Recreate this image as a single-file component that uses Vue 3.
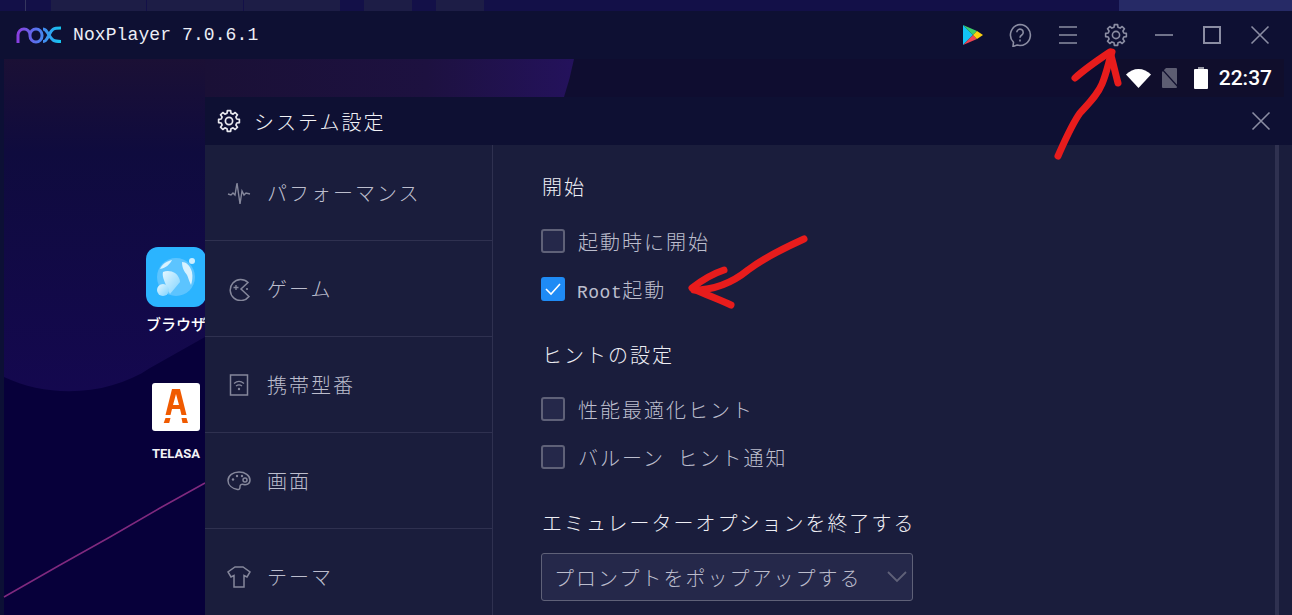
<script setup>
const topTabs = [
  { id: 1, cls: 'tab-a' },
  { id: 2, cls: 'tab-b' },
  { id: 3, cls: 'tab-b' },
  { id: 4, cls: 'tab-c' },
  { id: 5, cls: 'tab-c' }
]

const navItems = [
  { id: 'perf', label: 'パフォーマンス' },
  { id: 'game', label: 'ゲーム' },
  { id: 'phone', label: '携帯型番' },
  { id: 'screen', label: '画面' },
  { id: 'theme', label: 'テーマ' }
]

const startOptions = [
  { latin: '', label: '起動時に開始', checked: false },
  { latin: 'Root', label: '起動', checked: true }
]

const hintOptions = [
  { label: '性能最適化ヒント', checked: false },
  { label: 'バルーン ヒント通知', checked: false }
]

// outline of a cog, used by the toolbar and the dialog header
function gearPath(cx, cy, outer, inner, teeth) {
  const pts = []
  const step = (Math.PI * 2) / teeth
  for (let i = 0; i < teeth; i++) {
    const a = i * step - Math.PI / 2
    const list = [
      [a - step * 0.2, outer],
      [a + step * 0.2, outer],
      [a + step * 0.32, inner],
      [a + step * 0.68, inner]
    ]
    for (const [ang, r] of list) {
      pts.push((cx + Math.cos(ang) * r).toFixed(2) + ' ' + (cy + Math.sin(ang) * r).toFixed(2))
    }
  }
  return 'M' + pts.join('L') + 'Z'
}

const gear = gearPath(12, 12, 10.5, 8, 8)
</script>

<template>
  <div class="screen">
    <div class="top-strip">
      <span class="strip-line"></span>
      <span v-for="t in topTabs" :key="t.id" class="strip-tab" :class="t.cls"></span>
      <span class="strip-right"></span>
    </div>

    <header class="titlebar">
      <svg class="logo" width="46" height="18" viewBox="0 0 46 18" fill="none">
        <defs>
          <linearGradient id="noxGrad" x1="0" y1="0" x2="1" y2="0">
            <stop offset="0" stop-color="#8a3fe0" />
            <stop offset="0.5" stop-color="#4f7cf0" />
            <stop offset="1" stop-color="#12c8f0" />
          </linearGradient>
        </defs>
        <path d="M2 17V9a6 6 0 0 1 12 0v1a6 6 0 0 0 12 0V9a6 6 0 0 0-12 0v1a6 6 0 0 0 12 0M27 3c2 0 3 1 6 6s4 6.500 12 6.500M45 2c-8 0-9 1-12 7s-4 6.500-6 6.500" stroke="url(#noxGrad)" stroke-width="3" />
      </svg>
      <span class="app-name">NoxPlayer 7.0.6.1</span>
      <div class="tools">
        <svg class="tool" width="24" height="24" viewBox="0 0 24 24">
          <path d="M3 2v20l10-10z" fill="#12c3f5" />
          <path d="M3 2l10 10 4-4z" fill="#3ccf6b" />
          <path d="M3 22l10-10 4 4z" fill="#ee4453" />
          <path d="M17 8l6 4-6 4-4-4z" fill="#fdd10f" />
        </svg>
        <svg class="tool" width="24" height="24" viewBox="0 0 24 24" fill="none" stroke="#8b8da3" stroke-width="1.600">
          <path d="M12 1.500a10.500 10.500 0 1 1-3 20.600L5 23.500l.5-4.200A10.500 10.500 0 0 1 12 1.500z" />
          <path d="M8.800 9.300a3.200 3.200 0 1 1 5 2.700c-1.200.8-1.800 1.300-1.800 2.800" />
          <path d="M12 16.500v2" />
        </svg>
        <svg class="tool" width="24" height="24" viewBox="0 0 24 24" fill="none" stroke="#8b8da3" stroke-width="1.600">
          <path d="M3 4h18M3 12h18M3 20h18" />
        </svg>
        <svg class="tool" width="24" height="24" viewBox="0 0 24 24" fill="none" stroke="#8b8da3" stroke-width="1.600">
          <path :d="gear" stroke-linejoin="round" />
          <circle cx="12" cy="12" r="3.600" />
        </svg>
        <svg class="tool" width="24" height="24" viewBox="0 0 24 24" fill="none" stroke="#8b8da3" stroke-width="1.600">
          <path d="M3 12h18" />
        </svg>
        <svg class="tool" width="24" height="24" viewBox="0 0 24 24" fill="none" stroke="#8b8da3" stroke-width="2">
          <path d="M4 4h16v16H4z" />
        </svg>
        <svg class="tool" width="24" height="24" viewBox="0 0 24 24" fill="none" stroke="#8b8da3" stroke-width="1.600">
          <path d="M3.500 3.500l17 17M20.500 3.500l-17 17" />
        </svg>
      </div>
    </header>

    <main class="android">
      <svg class="wallpaper" width="1292" height="556" viewBox="0 0 1292 556">
        <defs>
          <linearGradient id="wallDown" x1="0" y1="0" x2="0" y2="1">
            <stop offset="0" stop-color="#1b1035" />
            <stop offset="0.28" stop-color="#0f0b3e" />
            <stop offset="1" stop-color="#14084f" />
          </linearGradient>
          <linearGradient id="wallAcross" x1="0" y1="0" x2="1" y2="0">
            <stop offset="0" stop-color="#1a1036" />
            <stop offset="0.6" stop-color="#1d1140" />
            <stop offset="1" stop-color="#24125c" />
          </linearGradient>
        </defs>
        <path d="M4 250H205V556H4z" fill="#07003a" />
        <path d="M4 0H205V278L150 309C110 336 50 340 4 318z" fill="url(#wallDown)" />
        <path d="M205 0H574Q570 20 564 38H205z" fill="url(#wallAcross)" />
        <path d="M4 538L60 506 110 478 160 449 205 424" fill="none" stroke="#80297f" stroke-width="1.500" />
      </svg>

      <div class="status">
        <svg width="25" height="20" viewBox="0 0 25 20"><path d="M0 6.500C7-1 18-1 25 6.500L12.500 20z" fill="#fff" /></svg>
        <svg class="sim" width="18" height="20" viewBox="0 0 18 20">
          <path d="M5 0h10a1 1 0 0 1 1 1v18a1 1 0 0 1-1 1H2a1 1 0 0 1-1-1V4z" fill="#5d5d72" />
          <path d="M0 0l18 20" stroke="#100f2e" stroke-width="1.300" />
        </svg>
        <svg class="batt" width="14" height="22" viewBox="0 0 14 22">
          <path d="M4 0h6v2H4z" fill="#9a9aa6" />
          <path d="M1 2h12a1 1 0 0 1 1 1v18a1 1 0 0 1-1 1H1a1 1 0 0 1-1-1V3a1 1 0 0 1 1-1z" fill="#fff" />
        </svg>
        <span class="clock">22:37</span>
      </div>

      <div class="app-icon browser">
        <svg width="60" height="60" viewBox="0 0 60 60">
          <defs>
            <linearGradient id="ballGrad" x1="0" y1="0" x2="1" y2="1">
              <stop offset="0" stop-color="#e6f7ff" />
              <stop offset="1" stop-color="#7fd3ff" />
            </linearGradient>
          </defs>
          <rect width="60" height="60" rx="12" fill="#2bb4ff" />
          <circle cx="30" cy="30" r="19" fill="#5cc4ff" />
          <path d="M17 25c4-2 9-1 12 1 3 2 5 6 5 9l-10 12c-2-3-3-6-4-9-2-5-4-9-3-13z" fill="url(#ballGrad)" />
          <path d="M36 15c4 0 8 3 10 10 1 5 0 10-1 13-2-4-3-8-4-10-2-3-5-6-5-13z" fill="#d8f2ff" />
          <path d="M14 22c2-5 7-8 12-9-2 4-6 8-12 9z" fill="#d8f2ff" />
          <circle cx="46" cy="14" r="3" fill="#cdeeff" />
          <circle cx="17" cy="43" r="6" fill="url(#ballGrad)" />
        </svg>
        <span class="browser-name">ブラウザ</span>
      </div>

      <div class="app-icon telasa">
        <svg width="48" height="48" viewBox="0 0 48 48">
          <rect width="48" height="48" rx="3" fill="#fff" />
          <path d="M20 6h8l6.500 26h-5l-1.500-6h-8l-1.500 6h-5zM24 11l-3 11h6z" fill="#f05a00" fill-rule="evenodd" />
          <path d="M13.500 35h5l-1.300 5h-5.500zM29.500 35h5l1.500 5h-5.500z" fill="#f05a00" />
        </svg>
        <span class="telasa-name">TELASA</span>
      </div>
    </main>

    <section class="dialog">
      <div class="dialog-head">
        <svg width="24" height="24" viewBox="0 0 24 24" fill="none" stroke="#e8e8ee" stroke-width="1.700">
          <path :d="gear" stroke-linejoin="round" />
          <circle cx="12" cy="12" r="3.600" />
        </svg>
        <span class="dialog-title">システム設定</span>
        <svg class="dialog-close" width="24" height="24" viewBox="0 0 24 24" fill="none" stroke="#8b8da3" stroke-width="1.600">
          <path d="M3.500 3.500l17 17M20.500 3.500l-17 17" />
        </svg>
      </div>

      <div class="dialog-body">
        <nav class="side">
          <div v-for="item in navItems" :key="item.id" class="side-item">
            <svg class="side-icon" width="24" height="24" viewBox="0 0 24 24" fill="none" stroke="#85879b" stroke-width="1.500">
              <path v-if="item.id === 'perf'" d="M1 13l3 1 2-2 2 2 2-12 3 21 2-13 2 4 2-2 4 1" stroke-width="1.400" />
              <g v-else-if="item.id === 'game'">
                <path d="M22 19.500A10.500 10.500 0 1 1 21 5.500L14 12z" />
                <path d="M9 8v5M6.500 10.500h5" stroke-width="1.300" />
                <circle cx="20" cy="12" r="1.100" fill="#85879b" stroke="none" />
              </g>
              <g v-else-if="item.id === 'phone'">
                <path d="M3.500 2h17v20h-17z" />
                <path d="M7 10.500c3-2.600 7-2.600 10 0M9 13c2-1.500 4-1.500 6 0" stroke-width="1.300" />
                <circle cx="12" cy="16" r="1.200" fill="#85879b" stroke="none" />
              </g>
              <g v-else-if="item.id === 'screen'">
                <path d="M12 3c6 0 11 3.500 11 8s-4 5-6.500 4.500c-2-.4-3.500 0-3.500 2 0 2-.5 3.500-2.500 3C5 19.500 1 16 1 11.500 1 6.500 6 3 12 3z" />
                <circle cx="6" cy="10.500" r="1.200" fill="#85879b" stroke="none" />
                <circle cx="10" cy="7" r="1.200" fill="#85879b" stroke="none" />
                <circle cx="15" cy="7" r="1.200" fill="#85879b" stroke="none" />
                <circle cx="18" cy="11" r="2" />
              </g>
              <path v-else d="M8 2h8l7 5-3 5-3-1.500V22H7V10.500L4 12 1 7z" />
            </svg>
            <span class="side-label">{{ item.label }}</span>
          </div>
        </nav>

        <div class="panel">
          <h3 class="heading">開始</h3>
          <label v-for="o in startOptions" :key="o.label" class="check-row">
            <span class="box" :class="{ on: o.checked }">
              <svg v-if="o.checked" width="20" height="20" viewBox="0 0 20 20" fill="none" stroke="#fff" stroke-width="1.600"><path d="M3 10l5 5 9-10" /></svg>
            </span>
            <span class="check-label" :class="{ tight: o.latin }"><span v-if="o.latin" class="latin">{{ o.latin }}</span>{{ o.label }}</span>
          </label>

          <h3 class="heading gap-top">ヒントの設定</h3>
          <label v-for="o in hintOptions" :key="o.label" class="check-row">
            <span class="box"></span>
            <span class="check-label">{{ o.label }}</span>
          </label>

          <h3 class="heading gap-top">エミュレーターオプションを終了する</h3>
          <div class="select">
            <span class="select-text">プロンプトをポップアップする</span>
            <svg width="20" height="12" viewBox="0 0 20 12" fill="none" stroke="#5f6178" stroke-width="1.800"><path d="M1 1l9 9 9-9" /></svg>
          </div>
        </div>
        <span class="scroll-thumb"></span>
      </div>
    </section>

    <!-- hand drawn annotations on top of the screenshot -->
    <svg class="marks" width="1292" height="615" viewBox="0 0 1292 615" fill="none" stroke="#e81c1c" stroke-width="7" stroke-linecap="round" stroke-linejoin="round">
      <path d="M1058 156C1066 138 1072 124 1080 113 1090 102 1098 94 1102 84 1107 72 1109 60 1112 52" />
      <path d="M1075 78C1086 68 1098 60 1110 52 1113 62 1115 72 1118 83" />
      <path d="M804 239C784 248 764 258 748 270 732 283 715 290 694 290" />
      <path d="M724 270C712 274 702 280 692 288 704 294 718 299 731 305" />
    </svg>
  </div>
</template>

<style scoped>
.screen {
  position: relative;
  width: 1292px;
  height: 615px;
  overflow: hidden;
  display: flex;
  flex-direction: column;
  background: #0e1033;
  font-family: "Noto Sans CJK JP", "Noto Sans", sans-serif;
}

.top-strip {
  height: 11px;
  flex: none;
  display: flex;
  background: #131048;
}
.strip-line {
  width: 1px;
  margin-left: 25px;
  background: #35365e;
}
.strip-tab {
  background: #1d1d46;
}
.tab-a {
  width: 95px;
  margin-left: 25px;
}
.tab-b {
  width: 96px;
  margin-left: 1px;
}
.tab-c {
  width: 48px;
  margin-left: 24px;
}
.strip-right {
  width: 173px;
  margin-left: auto;
  background: #262a66;
}

.titlebar {
  height: 48px;
  flex: none;
  display: flex;
  align-items: center;
  padding-left: 16px;
  background: #0e1033;
}
.logo {
  flex: none;
}
.app-name {
  margin-left: 11px;
  font-family: "Liberation Mono", monospace;
  font-size: 18px;
  letter-spacing: 0.1px;
  color: #eceef6;
}
.tools {
  margin-left: auto;
  margin-right: 20px;
  display: flex;
  gap: 24px;
}
.tool {
  display: block;
}

.android {
  position: relative;
  flex: 1;
  background: #0f0d30;
  border-left: 4px solid #0c1035;
  border-right: 8px solid #0e1033;
}
.wallpaper {
  position: absolute;
  left: -4px;
  top: 0;
}
.status {
  position: absolute;
  right: 0;
  top: 0;
  width: 164px;
  height: 38px;
  box-sizing: border-box;
  padding-right: 12px;
  display: flex;
  align-items: center;
  justify-content: flex-end;
  background: #100e2c;
}
.sim {
  margin-left: 10px;
}
.batt {
  margin-left: 15px;
}
.clock {
  margin-left: 11px;
  font-family: Roboto, sans-serif;
  font-weight: 500;
  font-size: 21px;
  color: #fff;
}

.app-icon {
  position: absolute;
  display: flex;
  flex-direction: column;
  white-space: nowrap;
}
.app-icon svg {
  display: block;
}
.browser {
  left: 142px;
  top: 188px;
}
.browser-name {
  margin-top: 7px;
  font-size: 15px;
  line-height: 20px;
  font-weight: 500;
  color: #fff;
}
.telasa {
  left: 148px;
  top: 324px;
}
.telasa-name {
  margin-top: 13px;
  font-family: Roboto, sans-serif;
  font-size: 13px;
  line-height: 20px;
  font-weight: 700;
  color: #f2f2f6;
}

.dialog {
  position: absolute;
  left: 205px;
  top: 97px;
  right: 0;
  bottom: 0;
  display: flex;
  flex-direction: column;
  background: #1a1d3c;
}
.dialog-head {
  height: 48px;
  flex: none;
  display: flex;
  align-items: center;
  padding-left: 12px;
  background: #0e1033;
}
.dialog-title {
  margin-left: 13px;
  font-size: 20px;
  letter-spacing: 2px;
  font-weight: 300;
  color: #f2f2f6;
}
.dialog-close {
  margin-left: auto;
  margin-right: 19px;
}
.dialog-body {
  position: relative;
  flex: 1;
  display: flex;
  min-height: 0;
}
.side {
  width: 288px;
  flex: none;
  box-sizing: border-box;
  border-right: 1px solid #2f3150;
}
.side-item {
  height: 96px;
  box-sizing: border-box;
  display: flex;
  align-items: center;
  padding-left: 22px;
  border-bottom: 1px solid #2f3150;
}
.side-label {
  margin-left: 16px;
  font-size: 20px;
  letter-spacing: 2px;
  font-weight: 300;
  color: #bcbdcd;
}
.panel {
  padding: 30px 0 0 48px;
}
.heading {
  margin: 0 0 18px 1px;
  font-size: 20px;
  line-height: 24px;
  letter-spacing: 2px;
  font-weight: 300;
  color: #eeeef4;
}
.gap-top {
  margin-top: 30px;
}
.check-row {
  height: 48px;
  display: flex;
  align-items: center;
}
.box {
  width: 24px;
  height: 24px;
  box-sizing: border-box;
  border: 2px solid #5f6178;
  border-radius: 3px;
  background: #25284a;
  display: flex;
  align-items: center;
  justify-content: center;
}
.box.on {
  border-color: #1f8bf5;
  background: #1f8bf5;
}
.check-label {
  margin-left: 13px;
  font-size: 20px;
  letter-spacing: 2px;
  word-spacing: 6px;
  font-weight: 300;
  color: #bcbdcd;
  white-space: pre;
}
.check-label.tight {
  margin-left: 12px;
}
.latin {
  font-family: "Liberation Mono", monospace;
  font-size: 18px;
  letter-spacing: 0.5px;
}
.select {
  width: 372px;
  height: 48px;
  box-sizing: border-box;
  display: flex;
  align-items: center;
  justify-content: space-between;
  padding: 0 5px 0 12px;
  border: 1px solid #5f6178;
  border-radius: 3px;
  background: #25284a;
}
.select-text {
  font-size: 20px;
  letter-spacing: 2px;
  font-weight: 300;
  color: #bcbdcd;
}
.scroll-thumb {
  position: absolute;
  right: 13px;
  top: 0;
  bottom: 0;
  width: 4px;
  background: #2f3150;
}

.marks {
  position: absolute;
  left: 0;
  top: 0;
  pointer-events: none;
}
</style>

<style>
html,
body {
  margin: 0;
  overflow: hidden;
  background: #0e1033;
}
</style>
